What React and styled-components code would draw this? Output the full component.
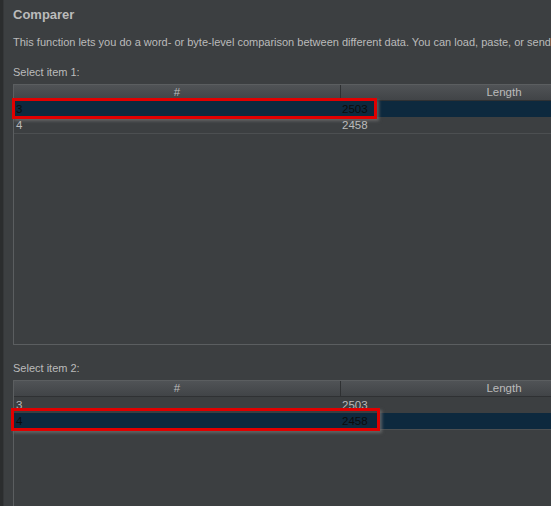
import React from 'react'
import styled, { createGlobalStyle } from 'styled-components'

const GlobalStyle = createGlobalStyle`
  html, body {
    margin: 0;
    padding: 0;
    background: #3c3f41;
    overflow: hidden;
  }
  body {
    font-family: "Liberation Sans", Arial, sans-serif;
    font-size: 11px;
    color: #bbbbbb;
  }
`;

const Window = styled.div`
  display: flex;
  width: 551px;
  height: 506px;
  overflow: hidden;
`;

const Edge = styled.div`
  width: 3px;
  flex: none;
  background: #2b2d2e;
  border-right: 1px solid #353739;
`;

const Panel = styled.main`
  flex: 1;
  padding: 6px 0 0 9px;
  display: flex;
  flex-direction: column;
`;

const Title = styled.h1`
  margin: 0;
  font-size: 13px;
  font-weight: 700;
  line-height: 18px;
  color: #bbbbbb;
`;

const Description = styled.p`
  margin: 11px 0 0;
  white-space: nowrap;
  line-height: 14px;
`;

const Label = styled.div`
  margin-top: ${p => p.$gap}px;
  line-height: 14px;
`;

const Table = styled.div`
  margin-top: 5px;
  width: 653px;
  height: ${p => p.$height}px;
  border: 1px solid #5b5e60;
  border-right: none;
  flex: none;
`;

const Row = styled.div`
  position: relative;
  display: grid;
  grid-template-columns: 326px 327px;
  height: 16px;
  line-height: 16px;
  font-size: 11.5px;
  background: ${p => (p.$selected ? '#0d293e' : 'transparent')};
  color: ${p => (p.$selected ? '#0b0b0b' : '#bbbbbb')};
  border-bottom: ${p => (p.$last ? '1px solid #4c4f51' : 'none')};
`;

const Header = styled.div`
  display: grid;
  grid-template-columns: 326px 327px;
  height: 15px;
  line-height: 15px;
  font-size: 11.5px;
  background: linear-gradient(#505356, #414447);
  border-bottom: 1px solid #2f3133;
`;

const HeadCell = styled.div`
  text-align: center;
  border-left: ${p => (p.$divided ? '1px solid #2f3133' : 'none')};
`;

const Cell = styled.div`
  padding-left: 2px;
`;

const Highlight = styled.div`
  position: absolute;
  left: ${p => p.$left}px;
  top: ${p => p.$top}px;
  width: ${p => p.$width}px;
  height: ${p => p.$height}px;
  border: 3px solid #e00000;
  box-sizing: border-box;
  box-shadow: 2px 2px 3px rgba(110, 110, 110, 0.8);
  pointer-events: none;
`;

function ItemTable({ rows, height, mark }) {
  return (
    <Table $height={height}>
      <Header>
        <HeadCell>#</HeadCell>
        <HeadCell $divided>Length</HeadCell>
      </Header>
      {rows.map((r, i) => (
        <Row key={r.id} $selected={r.selected} $last={i === rows.length - 1}>
          <Cell>{r.id}</Cell>
          <Cell>{r.length}</Cell>
          {r.selected && <Highlight {...mark} />}
        </Row>
      ))}
    </Table>
  );
}

export default function App() {
  return (
    <>
      <GlobalStyle />
      <Window>
        <Edge />
        <Panel>
          <Title>Comparer</Title>
          <Description>
            This function lets you do a word- or byte-level comparison between different data. You can load, paste, or send
          </Description>
          <Label $gap={16}>Select item 1:</Label>
          <ItemTable
            height={259}
            mark={{ $left: -2, $top: -3, $width: 365, $height: 21 }}
            rows={[
              { id: 3, length: 2503, selected: true },
              { id: 4, length: 2458 },
            ]}
          />
          <Label $gap={16}>Select item 2:</Label>
          <ItemTable
            height={200}
            mark={{ $left: -3, $top: -5, $width: 369, $height: 23 }}
            rows={[
              { id: 3, length: 2503 },
              { id: 4, length: 2458, selected: true },
            ]}
          />
        </Panel>
      </Window>
    </>
  );
}
